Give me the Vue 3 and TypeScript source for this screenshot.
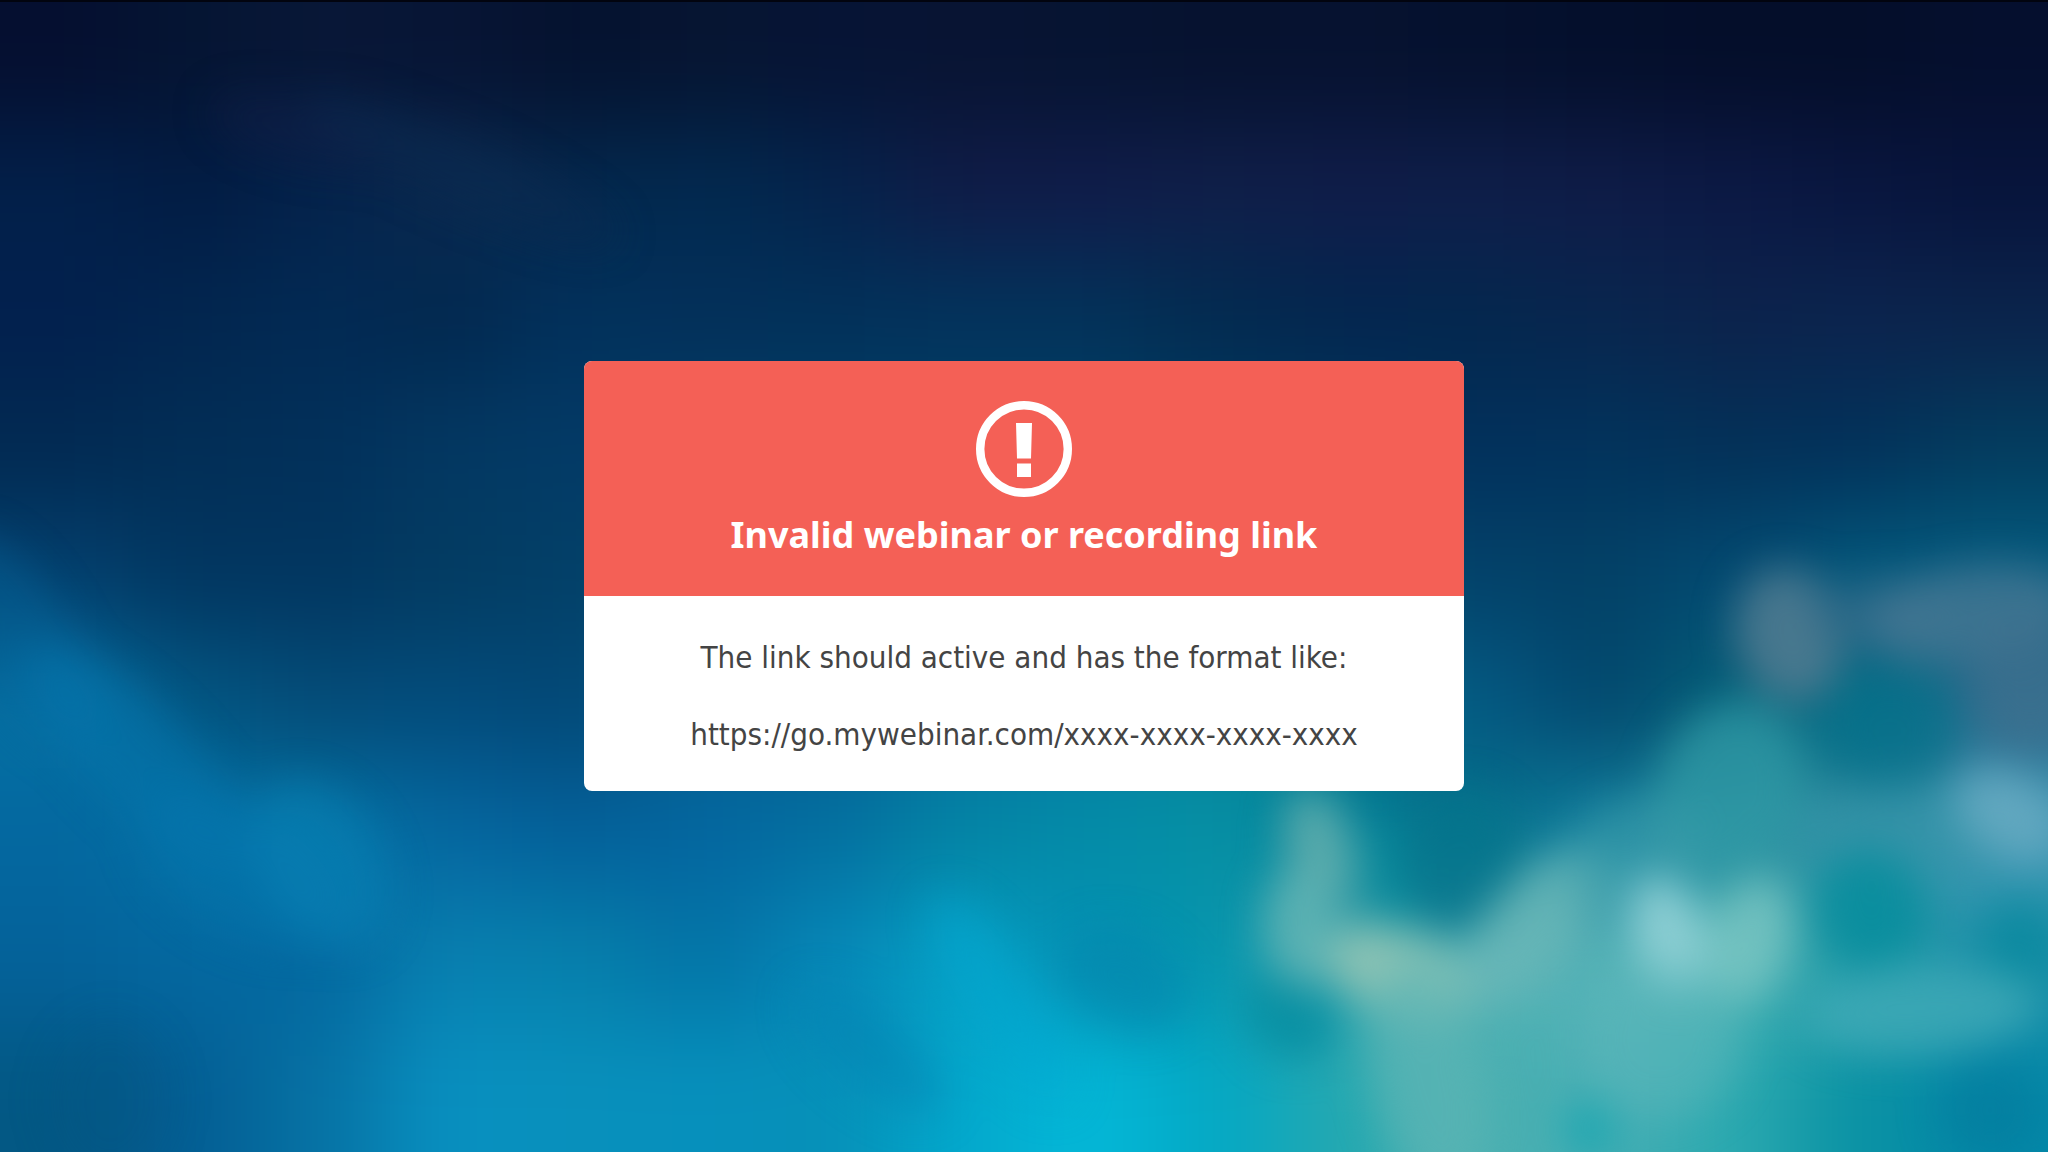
<script setup lang="ts">
interface Puff {
  x: number
  y: number
  rx: number
  ry: number
  turn: number
  color: string
  alpha: number
}

const cell = 128

// Colour field of the sky, row by row, each entry one cell of the 16 x 9 grid.
const sky: string[] = [
  '050f30 051533 081737 071535 05122f 061532 061435 081433 061432 06122f 061230 05112e 040f2c 040e2a 040e2a 050f2e',
  '02204a 021c44 04234c 0a294f 04284e 012a50 05234c 101c48 101c4a 101f4a 101d4a 0f1e4a 0f1c48 0c1945 091640 07143c',
  '02204e 02264f 022a54 02284f 02315c 03305a 02315a 02335c 02335a 022b50 03264f 03274e 08264e 0c234c 0c244e 0b244c',
  '022a52 022e56 02305a 033862 033a66 034068 034068 034068 034068 033c64 033860 02305c 02335c 033158 02315a 033c5e',
  '03406e 023660 023660 033c62 034068 034a70 045078 045880 045880 04567c 044a70 03426a 034166 034a72 03587c 045c80',
  '0570a2 035682 044c78 034c7c 034876 04608c 045c90 0470a0 0478a0 048098 047488 045a84 03486e 046078 056c84 2a6a8c',
  '0468a0 0470a4 0474a6 0567a0 04609a 0466a0 0470a0 0484a4 048ca8 0690a4 048098 05708a 1080a0 2890a0 3490a4 4098b4',
  '04629a 0468a0 0468a0 0880b0 0680ac 0474a6 0688b8 06a0c4 0490b4 0596ae 3ca4ac 50b0b4 58b4b8 50b4b4 249ca8 1c90a8',
  '035884 045e94 0672a4 0890c0 0890bc 0690bc 0690b8 04a8cc 04b8d8 04a8c4 24a8b0 48b0b0 48aeb4 2caab0 0a92a4 0488a8',
]

// The outer cells reach past the frame so that the blur has no pale rim.
const tiles = sky.flatMap((row, j) =>
  row.split(' ').map((hex, i) => ({
    x: i === 0 ? -cell : i * cell,
    y: j === 0 ? -cell : j * cell,
    w: i === 0 || i === 15 ? cell * 2 : cell + 1,
    h: j === 0 || j === 8 ? cell * 2 : cell + 1,
    fill: '#' + hex,
  })),
)

const puffs: Puff[] = [
  { x: 300, y: 130, rx: 90, ry: 30, turn: 14, color: '#14204c', alpha: 0.4 },
  { x: 460, y: 170, rx: 170, ry: 30, turn: 24, color: '#0c2c52', alpha: 0.5 },
  { x: 20, y: 640, rx: 50, ry: 120, turn: -30, color: '#0468a0', alpha: 0.4 },
  { x: 140, y: 760, rx: 150, ry: 50, turn: 45, color: '#0478b0', alpha: 0.5 },
  { x: 240, y: 870, rx: 110, ry: 60, turn: 30, color: '#0474ac', alpha: 0.5 },
  { x: 320, y: 865, rx: 60, ry: 90, turn: -30, color: '#0884b8', alpha: 0.5 },
  { x: 110, y: 1100, rx: 60, ry: 80, turn: 0, color: '#03527c', alpha: 0.2 },
  { x: 870, y: 1050, rx: 90, ry: 36, turn: 40, color: '#0484b4', alpha: 0.5 },
  { x: 1000, y: 1000, rx: 120, ry: 36, turn: 58, color: '#02aad4', alpha: 0.5 },
  { x: 1125, y: 980, rx: 66, ry: 46, turn: 30, color: '#0484ac', alpha: 0.5 },
  { x: 1290, y: 1015, rx: 50, ry: 40, turn: 40, color: '#048ca0', alpha: 0.8 },
  { x: 1390, y: 880, rx: 26, ry: 60, turn: -10, color: '#048c9c', alpha: 0.6 },
  { x: 1460, y: 860, rx: 60, ry: 70, turn: 0, color: '#04748c', alpha: 0.8 },
  { x: 1790, y: 635, rx: 54, ry: 68, turn: -15, color: '#547c92', alpha: 0.85 },
  { x: 1880, y: 610, rx: 70, ry: 34, turn: 0, color: '#2c6888', alpha: 0.7 },
  { x: 1970, y: 615, rx: 110, ry: 48, turn: -8, color: '#4a7a94', alpha: 0.75 },
  { x: 2030, y: 680, rx: 60, ry: 70, turn: 0, color: '#40708e', alpha: 0.7 },
  { x: 1890, y: 730, rx: 66, ry: 60, turn: 0, color: '#04708a', alpha: 0.7 },
  { x: 1910, y: 830, rx: 120, ry: 46, turn: 0, color: '#3494a8', alpha: 0.6 },
  { x: 2010, y: 815, rx: 60, ry: 40, turn: 30, color: '#6cacc4', alpha: 0.8 },
  { x: 1730, y: 790, rx: 72, ry: 90, turn: 20, color: '#309aa6', alpha: 0.75 },
  { x: 1320, y: 850, rx: 34, ry: 62, turn: -15, color: '#5cacac', alpha: 0.95 },
  { x: 1300, y: 930, rx: 34, ry: 60, turn: -8, color: '#60b4b4', alpha: 0.9 },
  { x: 1400, y: 975, rx: 76, ry: 42, turn: 24, color: '#90c4b4', alpha: 0.95 },
  { x: 1430, y: 1080, rx: 56, ry: 120, turn: -12, color: '#5cb4b4', alpha: 0.75 },
  { x: 1530, y: 930, rx: 96, ry: 46, turn: -48, color: '#6cb8b8', alpha: 0.8 },
  { x: 1630, y: 860, rx: 70, ry: 60, turn: -30, color: '#40a0ac', alpha: 0.5 },
  { x: 1668, y: 935, rx: 36, ry: 60, turn: -16, color: '#98d4d8', alpha: 0.85 },
  { x: 1750, y: 940, rx: 40, ry: 64, turn: 16, color: '#80c8c4', alpha: 0.75 },
  { x: 1660, y: 1040, rx: 80, ry: 80, turn: 0, color: '#60b8bc', alpha: 0.5 },
  { x: 1870, y: 910, rx: 56, ry: 60, turn: -20, color: '#048c9c', alpha: 0.8 },
  { x: 2020, y: 945, rx: 40, ry: 44, turn: 0, color: '#04889c', alpha: 0.7 },
  { x: 1920, y: 1010, rx: 120, ry: 44, turn: -4, color: '#44acb8', alpha: 0.75 },
  { x: 1990, y: 1110, rx: 50, ry: 50, turn: 0, color: '#047c9c', alpha: 0.6 },
  { x: 1590, y: 1130, rx: 24, ry: 30, turn: 0, color: '#0ca4b0', alpha: 0.7 },
]
</script>

<template>
  <main class="page">
    <svg class="sky" viewBox="0 0 2048 1152" preserveAspectRatio="none" aria-hidden="true">
      <defs>
        <filter id="soft" filterUnits="userSpaceOnUse" x="-128" y="-128" width="2304" height="1408" color-interpolation-filters="sRGB">
          <feGaussianBlur stdDeviation="48" />
        </filter>
        <filter id="cloud" filterUnits="userSpaceOnUse" x="-128" y="-128" width="2304" height="1408" color-interpolation-filters="sRGB">
          <feGaussianBlur stdDeviation="20" />
        </filter>
      </defs>
      <g filter="url(#soft)">
        <rect v-for="(t, i) in tiles" :key="i" :x="t.x" :y="t.y" :width="t.w" :height="t.h" :fill="t.fill" />
      </g>
      <g filter="url(#cloud)">
        <ellipse
          v-for="(p, i) in puffs"
          :key="i"
          :cx="p.x"
          :cy="p.y"
          :rx="p.rx"
          :ry="p.ry"
          :fill="p.color"
          :fill-opacity="p.alpha"
          :transform="`rotate(${p.turn} ${p.x} ${p.y})`"
        />
      </g>
    </svg>

    <section class="card" role="alert">
      <header class="head">
        <svg class="icon" viewBox="0 0 96 96" aria-hidden="true">
          <circle cx="48" cy="48" r="43.8" fill="none" stroke="#fff" stroke-width="8.4" />
          <path d="M40 22h16l-1 35.500H41zM41 62.500h14V76H41z" fill="#fff" />
        </svg>
        <h1 class="title">Invalid webinar or recording link</h1>
      </header>
      <div class="body">
        <p class="line">The link should active and has the format like:</p>
        <p class="line">https://go.mywebinar.com/xxxx-xxxx-xxxx-xxxx</p>
      </div>
    </section>
  </main>
</template>

<style>
body {
  margin: 0;
  background: #04305a;
}
</style>

<style scoped>
.page {
  position: relative;
  box-sizing: border-box;
  min-height: 100vh;
  display: flex;
  align-items: center;
  justify-content: center;
  overflow: hidden;
  font-family: Tahoma, "Noto Sans", sans-serif;
}

.page::before {
  content: "";
  position: absolute;
  inset: 0 0 auto;
  z-index: 1;
  height: 2px;
  background: #02040f;
}

.sky {
  position: absolute;
  inset: 0;
  width: 100%;
  height: 100%;
}

.card {
  position: relative;
  width: 43%;
  min-width: 760px;
  border-radius: 8px;
  overflow: hidden;
  background: #fff;
  text-align: center;
}

.head {
  display: flex;
  flex-direction: column;
  align-items: center;
  gap: 14px;
  padding: 40px 24px 37px;
  background: #f46056;
  color: #fff;
}

.icon {
  width: 96px;
  height: 96px;
}

.title {
  margin: 0;
  font-size: 36px;
  line-height: 48px;
  font-weight: 700;
}

.body {
  display: flex;
  flex-direction: column;
  gap: 32px;
  padding: 39px 24px 34px;
  color: #444;
  font-family: Tahoma, "DejaVu Sans Condensed", "Noto Sans", sans-serif;
}

.line {
  margin: 0;
  font-size: 31px;
  line-height: 45px;
}
</style>
